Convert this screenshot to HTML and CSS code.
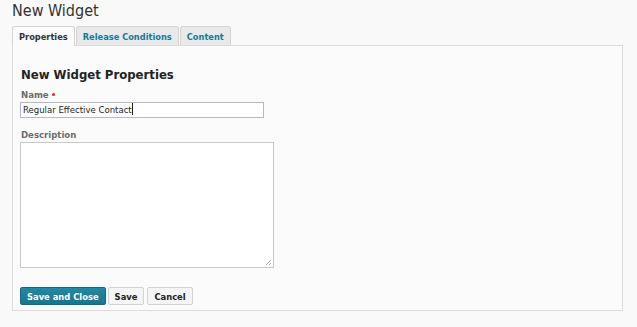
FILE: index.html
```html
<!DOCTYPE html>
<html lang="en">
<head>
  <meta charset="UTF-8">
  <title>New Widget</title>
  <link rel="stylesheet" href="styles.css">
</head>
<body>
  <div class="page">
    <h1 class="title">New Widget</h1>

    <ul class="tabs">
      <li class="tab active">Properties</li>
      <li class="tab">Release Conditions</li>
      <li class="tab">Content</li>
    </ul>

    <div class="panel">
      <h2 class="panel-title">New Widget Properties</h2>

      <div class="field">
        <label class="label" for="name">Name<span class="req"></span></label>
        <div class="input">Regular Effective Contact<span class="caret"></span></div>
      </div>

      <div class="field">
        <label class="label" for="desc">Description</label>
        <div class="textarea">
          <span class="grip"></span>
        </div>
      </div>

      <div class="actions">
        <button class="btn primary">Save and Close</button>
        <button class="btn">Save</button>
        <button class="btn">Cancel</button>
      </div>
    </div>
  </div>
</body>
</html>
```

FILE: styles.css
```css
body {
  margin: 0;
  background: #f9f9f9;
  font-family: "DejaVu Sans Condensed", "DejaVu Sans", Verdana, sans-serif;
  font-stretch: condensed;
  color: #333;
}

.page {
  padding: 0 14px 0 12px;
}

.title {
  margin: 0;
  padding-top: 1px;
  height: 25px;
  font-size: 16px;
  font-weight: normal;
  line-height: 20px;
  color: #333;
}

.tabs {
  display: flex;
  list-style: none;
  margin: 0;
  padding: 0;
  height: 19px;
}

.tab {
  box-sizing: border-box;
  height: 19px;
  margin-right: 1px;
  padding: 0 6px;
  border: 1px solid #d4d4d4;
  border-bottom: none;
  border-radius: 3px 3px 0 0;
  background: #e9e9e9;
  color: #1b7893;
  font-size: 9.2px;
  font-weight: bold;
  line-height: 19px;
  position: relative;
  z-index: 1;
}

.tab.active {
  background: #fbfbfb;
  color: #333;
  height: 20px;
}

.panel {
  border: 1px solid #dcdcdc;
  background: #fbfbfb;
  padding: 20px 7px 0;
  height: 244px;
}

.panel-title {
  margin: 0 0 6px 1px;
  font-size: 13px;
  line-height: 17px;
  color: #222;
}

.field {
  margin-bottom: 11px;
}

.label {
  display: block;
  margin: 0 0 2px 1px;
  font-size: 9.5px;
  font-weight: bold;
  line-height: 11px;
  color: #6b6b6b;
}

.req {
  display: inline-block;
  width: 3px;
  height: 3px;
  margin-left: 3px;
  border-radius: 50%;
  background: #e0271f;
  vertical-align: 2px;
}

.input {
  box-sizing: border-box;
  width: 244px;
  height: 16px;
  padding: 0 2px;
  border: 1px solid #b4b8c6;
  background: #fff;
  font-size: 9.5px;
  line-height: 14px;
  color: #222;
}

.caret {
  display: inline-block;
  width: 1px;
  height: 12px;
  background: #222;
  vertical-align: -2px;
}

.textarea {
  position: relative;
  box-sizing: border-box;
  width: 254px;
  height: 126px;
  border: 1px solid #c8c8c8;
  background: #fff;
}

.grip {
  position: absolute;
  right: 2px;
  bottom: 2px;
  width: 5px;
  height: 5px;
  background: linear-gradient(135deg, transparent 50%, #aaa 50%, #aaa 60%, transparent 60%, transparent 75%, #aaa 75%, #aaa 85%, transparent 85%);
}

.actions {
  display: flex;
  gap: 3px;
  margin-top: 19px;
}

.btn {
  height: 18px;
  padding: 0 6px;
  border: 1px solid #d3d3d3;
  border-radius: 2px;
  background: #f5f5f5;
  font-family: inherit;
  font-stretch: inherit;
  font-size: 9.3px;
  font-weight: bold;
  color: #222;
}

.btn.primary {
  margin-right: -1px;
  border-color: #126a80;
  background: linear-gradient(#2489a3, #157690);
  color: #fff;
}
```
